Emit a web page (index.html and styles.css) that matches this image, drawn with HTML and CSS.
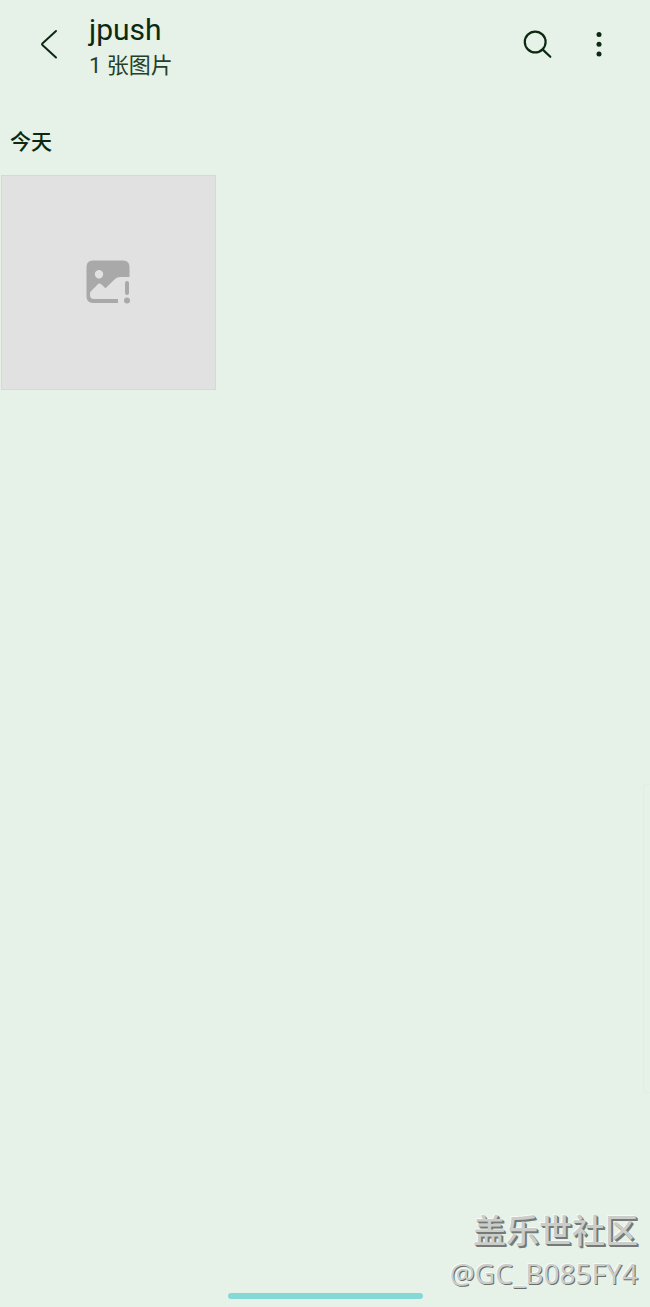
FILE: index.html
```html
<!DOCTYPE html>
<html lang="zh-CN">
<head>
<meta charset="utf-8">
<meta name="viewport" content="width=device-width, initial-scale=1">
<title>jpush</title>
<link rel="stylesheet" href="styles.css">
</head>
<body>
<div class="screen">
  <header class="bar">
    <button class="icon-button" type="button" aria-label="返回">
      <svg width="48" height="48" viewBox="0 0 48 48" fill="none" stroke="currentColor" stroke-width="2" stroke-linecap="round" stroke-linejoin="round"><path d="M31 11 17.400 23.400q-.8.8 0 1.600L31 37.500"/></svg>
    </button>
    <div class="heading">
      <h1 class="title">jpush</h1>
      <p class="count">1 张图片</p>
    </div>
    <div class="actions">
      <button class="icon-button" type="button" aria-label="搜索">
        <svg width="48" height="48" viewBox="0 0 48 48" fill="none" stroke="currentColor" stroke-width="2.200" stroke-linecap="round"><circle cx="22.200" cy="22" r="10.400"/><path d="m29.800 29.600 7.500 7.200"/></svg>
      </button>
      <button class="icon-button" type="button" aria-label="更多选项">
        <svg width="48" height="48" viewBox="0 0 48 48" fill="currentColor"><circle cx="24" cy="14.400" r="2.500"/><circle cx="24" cy="24.200" r="2.500"/><circle cx="24" cy="34" r="2.500"/></svg>
      </button>
    </div>
  </header>
  <main class="gallery">
    <h2 class="date">今天</h2>
    <div class="grid">
      <button class="thumb" type="button" aria-label="无法显示的图片">
        <svg width="44" height="44" viewBox="0 0 44 44">
          <path fill="#a9a9a9" fill-rule="evenodd" d="M7 .5H37Q43.500 .5 43.500 7V17H34Q31 17 29 19L19.500 28.300 15.200 24.300Q13.500 22.700 11.800 24.300L5 31.300Q4 32.300 4 33.500V35Q4 39 8 39H32V43H7Q.5 43 .5 36.500V7Q.5 .5 7 .5ZM13 10A4.200 4.200 0 1 0 13 18.400 4.200 4.200 0 1 0 13 10Z"/>
          <rect x="39" y="21" width="4" height="14" rx="2" fill="#a9a9a9"/>
          <circle cx="41" cy="40.500" r="3" fill="#a9a9a9"/>
        </svg>
      </button>
    </div>
  </main>
  <footer class="watermark">
    <p class="community">盖乐世社区</p>
    <p class="author">@GC_B085FY4</p>
  </footer>
  <div class="home"></div>
  <div class="edge"></div>
</div>
</body>
</html>
```
FILE: styles.css
```css
* {
  box-sizing: border-box;
}

body,
h1,
h2,
p {
  margin: 0;
}

body {
  background: #e6f1e7;
  color: #0b2913;
  font-family: Roboto, "Noto Sans CJK SC", sans-serif;
}

button {
  padding: 0;
  border: 0;
  background: none;
  color: inherit;
}

svg {
  display: block;
}

.screen {
  position: relative;
  display: flex;
  flex-direction: column;
  min-height: 100vh;
  overflow: hidden;
}

.bar {
  display: flex;
  align-items: center;
  height: 88px;
  padding: 0 27px 0 25px;
}

.heading {
  flex: 1;
  padding: 4px 0 0 16px;
}

.title {
  font-size: 30px;
  font-weight: 400;
  line-height: 40px;
}

.count {
  color: #24402b;
  font-size: 22px;
  font-weight: 400;
  line-height: 32px;
}

.actions {
  display: flex;
  gap: 14px;
}

.gallery {
  flex: 1;
}

.date {
  padding: 39px 10px 18px;
  font-size: 21px;
  font-weight: 500;
  line-height: 30px;
}

.grid {
  display: grid;
  grid-template-columns: repeat(3, 1fr);
  gap: 2px;
  padding: 0 1px;
}

.thumb {
  display: flex;
  align-items: center;
  justify-content: center;
  aspect-ratio: 1;
  border: 1px solid #d3dad5;
  background: #e1e1e1;
}

.watermark {
  padding: 0 12px 0 0;
  color: #cbcdcb;
  text-align: right;
}

.community {
  font-size: 33px;
  font-weight: 500;
  line-height: 42px;
  text-shadow: 1px 1px 0 #747a75, 2px 2px 0 #747a75, -1px -1px 0 #f5faf5;
}

.author {
  font-family: "Noto Sans", sans-serif;
  font-size: 28px;
  line-height: 40px;
  text-shadow: 1px 1px 0 #686e69, -1px -1px 0 #f5faf5;
}

.home {
  align-self: center;
  width: 30%;
  height: 6px;
  margin: 0 0 8px;
  border-radius: 3px;
  background: #84d9d7;
}

.edge {
  position: absolute;
  top: 60%;
  right: 0;
  width: 7px;
  height: 309px;
  border: 1px solid #e2ede3;
  border-right: 0;
  border-radius: 4px 0 0 4px;
}
```
